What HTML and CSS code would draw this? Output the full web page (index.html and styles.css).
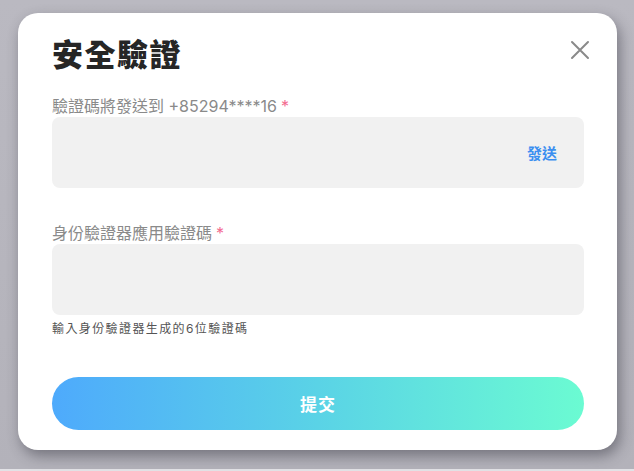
FILE: index.html
```html
<!DOCTYPE html>
<html lang="zh-Hant">
<head>
<meta charset="utf-8">
<link rel="stylesheet" href="styles.css">
</head>
<body>
<div class="overlay">
  <div class="dialog">
    <div class="dialog-head">
      <h1 class="title">安全驗證</h1>
      <button class="close" aria-label="close">
        <svg width="20" height="20" viewBox="0 0 20 20"><path d="M2 2 L18 18 M18 2 L2 18" stroke="#8a8a8a" stroke-width="2" stroke-linecap="round" fill="none"/></svg>
      </button>
    </div>
    <div class="field field-first">
      <div class="label">驗證碼將發送到 +85294****16<span class="req">*</span></div>
      <div class="input">
        <span class="send">發送</span>
      </div>
    </div>
    <div class="field field-second">
      <div class="label">身份驗證器應用驗證碼<span class="req">*</span></div>
      <div class="input"></div>
      <div class="help">輸入身份驗證器生成的6位驗證碼</div>
    </div>
    <button class="submit">提交</button>
  </div>
</div>
</body>
</html>
```
FILE: styles.css
```css
html, body {
  margin: 0;
  padding: 0;
}
body {
  width: 634px;
  height: 471px;
  background: linear-gradient(to bottom, #bab9c1 0, #b3b2ba 469px, #e2e2e6 469px);
  font-family: "Inter", "Noto Sans CJK TC", sans-serif;
  overflow: hidden;
}
.overlay {
  padding: 13px 0 0 18px;
}
.dialog {
  box-sizing: border-box;
  width: 599px;
  height: 437px;
  background: #fff;
  border-radius: 20px;
  box-shadow: 3px 6px 14px rgba(40, 40, 50, 0.45);
  padding: 22px 33px 20px 34px;
  display: flex;
  flex-direction: column;
}
.dialog-head {
  display: flex;
  justify-content: space-between;
  align-items: center;
  height: 40px;
}
.title {
  margin: 0;
  font-size: 31px;
  line-height: 40px;
  font-weight: 900;
  color: #262626;
  letter-spacing: 1.5px;
}
.close {
  border: 0;
  background: none;
  padding: 0;
  width: 20px;
  height: 20px;
  margin-right: -6px;
  margin-top: -10px;
}
.field {
  display: flex;
  flex-direction: column;
}
.field-first {
  margin-top: 21px;
}
.field-second {
  margin-top: 35px;
}
.label {
  font-size: 16px;
  line-height: 20px;
  color: #8a8a8a;
  margin-bottom: 1px;
}
.req {
  color: #f36b8f;
  margin-left: 4px;
}
.input {
  height: 71px;
  background: #f1f1f1;
  border-radius: 8px;
  display: flex;
  align-items: center;
  justify-content: flex-end;
  padding: 0 27px;
}
.send {
  color: #3b8ff0;
  font-size: 15px;
  font-weight: 700;
}
.help {
  margin-top: 6px;
  font-size: 12px;
  line-height: 16px;
  color: #555;
  letter-spacing: 1.4px;
}
.submit {
  margin-top: 40px;
  height: 54px;
  border: 0;
  border-radius: 27px;
  background: linear-gradient(to right, #4eaafc, #5ad3e6 50%, #6bfbd2);
  color: #fff;
  font-family: "Noto Sans CJK TC", sans-serif;
  font-size: 17px;
  font-weight: 700;
  letter-spacing: 1px;
}
```
